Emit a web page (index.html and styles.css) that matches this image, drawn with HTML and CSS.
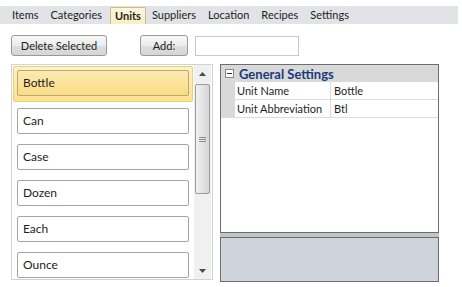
FILE: index.html
```html
<!DOCTYPE html>
<html>
<head>
  <title>Units</title>
  <link rel="stylesheet" href="styles.css">
</head>
<body>
  <div class="tabs">
    <span class="tab">Items</span>
    <span class="tab">Categories</span>
    <span class="tab active">Units</span>
    <span class="tab">Suppliers</span>
    <span class="tab">Location</span>
    <span class="tab">Recipes</span>
    <span class="tab">Settings</span>
  </div>

  <div class="toolbar">
    <button class="btn btn-delete">Delete Selected</button>
    <button class="btn btn-add">Add:</button>
    <input type="text" class="add-input">
  </div>

  <div class="content">
    <div class="list-panel">
      <div class="list-items">
        <div class="item-wrap selected"><div class="item">Bottle</div></div>
        <div class="item-wrap"><div class="item">Can</div></div>
        <div class="item-wrap"><div class="item">Case</div></div>
        <div class="item-wrap"><div class="item">Dozen</div></div>
        <div class="item-wrap"><div class="item">Each</div></div>
        <div class="item-wrap"><div class="item">Ounce</div></div>
      </div>
      <div class="scrollbar">
        <div class="arrow">
          <svg width="7" height="4" viewBox="0 0 7 4"><path d="M0 4 L3.5 0 L7 4 Z" fill="#4a4a4a"/></svg>
        </div>
        <div class="track">
          <div class="thumb">
            <div class="grip"><span></span><span></span><span></span></div>
          </div>
        </div>
        <div class="arrow">
          <svg width="7" height="4" viewBox="0 0 7 4"><path d="M0 0 L7 0 L3.5 4 Z" fill="#4a4a4a"/></svg>
        </div>
      </div>
    </div>

    <div class="prop-panel">
      <div class="grid">
        <div class="grid-header">
          <span class="collapse">
            <svg width="9" height="9" viewBox="0 0 9 9"><rect x="0.5" y="0.5" width="8" height="8" fill="#fff" stroke="#8a8a8a"/><path d="M2 4.5 H7" stroke="#333" stroke-width="1"/></svg>
          </span>
          <span class="group-title">General Settings</span>
        </div>
        <div class="grid-row">
          <span class="gutter"></span>
          <span class="prop-name">Unit Name</span>
          <span class="prop-value">Bottle</span>
        </div>
        <div class="grid-row">
          <span class="gutter"></span>
          <span class="prop-name">Unit Abbreviation</span>
          <span class="prop-value">Btl</span>
        </div>
      </div>
      <div class="splitter"></div>
      <div class="description"></div>
    </div>
  </div>
</body>
</html>
```

FILE: styles.css
```css
body { margin: 0; font-family: Lato, "Noto Sans", sans-serif; font-size: 11px; color: #1e1e1e; background: #fff; }

.tabs { margin-top: 6px; width: 452px; height: 18px; padding-left: 6px; background: #e1e3e6; display: flex; align-items: stretch; }
.tab { padding: 0 6px; line-height: 18px; }
.tab.active { margin: 1px 0 0 2px; padding: 0 4px; line-height: 16px; font-weight: bold; background: linear-gradient(#fdf6dc, #fbeec4); border: 1px solid #cdbb83; border-bottom: none; border-radius: 2px 2px 0 0; }

.toolbar { display: flex; align-items: center; padding: 11px 0 0 11px; height: 21px; }
.btn { font-family: inherit; font-size: 11px; color: #1e1e1e; height: 21px; padding: 0; border: 1px solid #9a9a9a; border-radius: 3px; background: linear-gradient(#f7f7f7 0%, #ececec 50%, #dedede 51%, #d6d6d6 100%); }
.btn-delete { width: 96px; }
.btn-add { width: 48px; margin-left: 33px; }
.add-input { box-sizing: border-box; width: 104px; height: 20px; margin-left: 7px; border: 1px solid #c8c8c8; padding: 0; }

.content { display: flex; padding: 8px 0 0 11px; }

.list-panel { box-sizing: border-box; width: 202px; height: 216px; border: 1px solid #d2d2d2; display: flex; }
.list-items { flex: 1; padding: 1px 0 0 1px; }
.item-wrap { box-sizing: border-box; width: 180px; height: 36px; padding: 6px 4px 4px 4px; }
.item-wrap.selected { border: 1px solid #e8cf7e; border-radius: 2px; padding: 3px 3px 4px 3px; background: linear-gradient(#fdf1c9, #fbe08e); }
.item { box-sizing: border-box; height: 26px; border: 1px solid #a5a5a5; border-radius: 2px; background: #fff; padding-left: 5px; line-height: 24px; font-size: 12px; }
.selected .item { background: linear-gradient(#fdeab0, #fbdc85); border-color: #b8a878; }

.scrollbar { width: 17px; margin-right: 1px; display: flex; flex-direction: column; background: #f0f0f0; }
.arrow { height: 17px; display: flex; align-items: center; justify-content: center; }
.track { flex: 1; }
.thumb { box-sizing: border-box; margin: 2px 1px 0; height: 110px; border: 1px solid #9b9b9b; border-radius: 2px; background: linear-gradient(90deg, #f2f2f2, #e3e3e3 50%, #d6d6d6); display: flex; align-items: center; justify-content: center; }
.grip { display: flex; flex-direction: column; gap: 1px; }
.grip span { display: block; width: 7px; height: 1px; background: #8c8c8c; }

.prop-panel { margin-left: 7px; width: 219px; display: flex; flex-direction: column; }
.grid { box-sizing: border-box; height: 169px; border: 1px solid #6d6d6d; display: flex; flex-direction: column; background: #fff; }
.grid-header { height: 17px; display: flex; align-items: center; background: #d9d9d9; }
.collapse { width: 14px; display: flex; justify-content: center; padding-left: 1px; }
.group-title { color: #1c3a7b; font-weight: bold; font-size: 13px; margin-left: 3px; }
.grid-row { height: 17px; display: flex; border-bottom: 1px solid #dcdcdc; }
.gutter { width: 14px; background: #d9d9d9; }
.prop-name { width: 93px; padding-left: 2px; border-right: 1px solid #dcdcdc; line-height: 17px; }
.prop-value { flex: 1; padding-left: 3px; line-height: 17px; }
.splitter { height: 4px; background: #c4c4c4; }
.description { box-sizing: border-box; height: 45px; border: 1px solid #6d6d6d; background: #cfd3dc; }
```
